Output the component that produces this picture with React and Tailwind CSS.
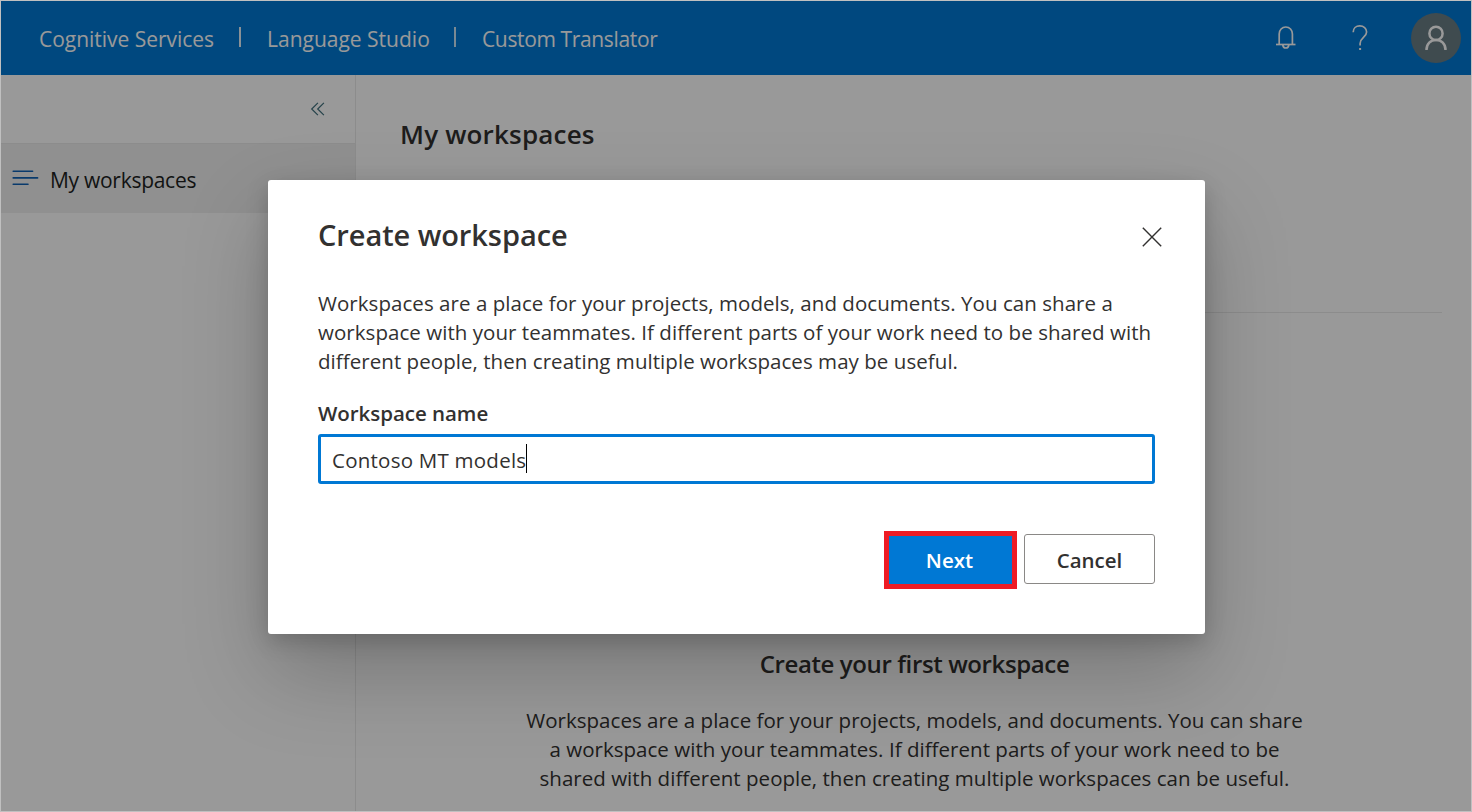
function NavLinesIcon() {
  return (
    <svg width="27" height="17" viewBox="0 0 27 17" fill="none" stroke="#0f62b5" strokeWidth="1.6" strokeLinecap="round">
      <path d="M1.2 2.2H20.6M1.2 8.9H25.6M1.2 15.2H16" />
    </svg>
  );
}

function CollapseIcon() {
  return (
    <svg width="16" height="16" viewBox="0 0 16 16" fill="none" stroke="#3f6f7c" strokeWidth="1.2">
      <path d="M7.9 1.8L1.7 8L7.9 14.2M13.9 1.8L7.7 8L13.9 14.2" />
    </svg>
  );
}

function BellIcon() {
  return (
    <svg width="22" height="26" viewBox="0 0 22 26" fill="none" stroke="#fff" strokeWidth="1.7">
      <path d="M4.2 19.5V9C4.2 5 7 2 10.8 2S17.4 5 17.4 9V19.5" />
      <path d="M1 19.5H20.5" />
      <path d="M7.8 19.8C8 22 9.2 23 10.8 23S13.6 22 13.8 19.8" />
    </svg>
  );
}

function HelpIcon() {
  return (
    <svg width="18" height="28" viewBox="0 0 18 28" fill="none" stroke="#fff" strokeWidth="1.7">
      <path d="M2.2 8.2C2.2 4.4 5 1.9 8.8 1.9S15.6 4.4 15.6 8C15.6 13.4 9.1 13.6 9.1 19.5V21.5" />
      <path d="M9.1 24V26" strokeWidth="2" />
    </svg>
  );
}

function PersonIcon() {
  return (
    <svg width="24" height="26" viewBox="0 0 24 26" fill="none" stroke="#fff" strokeWidth="2.5">
      <circle cx="12" cy="8.4" r="6.6" />
      <path d="M2.5 25C2.5 18.8 6.6 15 12 15S21.5 18.8 21.5 25" />
    </svg>
  );
}

function CloseIcon() {
  return (
    <svg width="20" height="20" viewBox="0 0 20 20" fill="none" stroke="#323130" strokeWidth="1.4">
      <path d="M0.8 0.8L19.2 19.2M19.2 0.8L0.8 19.2" />
    </svg>
  );
}

function Header() {
  return (
    <header className="flex h-[74px] shrink-0 items-center justify-between bg-[#0078d4] pl-[38px] pr-[10px] text-white">
      <nav className="flex items-center pt-px text-[21px] leading-[28px] whitespace-nowrap">
        <span className="w-[200px] tracking-[-0.03px]">Cognitive Services</span>
        <span className="-mt-[3px] h-5 w-[2px] bg-white/90" />
        <span className="ml-[26px] w-[187px]">Language Studio</span>
        <span className="-mt-[3px] h-5 w-[2px] bg-white/80" />
        <span className="ml-[26px] tracking-[-0.36px]">Custom Translator</span>
      </nav>
      <div className="flex items-center">
        <span className="mr-[54px]"><BellIcon /></span>
        <span className="mr-[42px]"><HelpIcon /></span>
        <span className="flex size-[50px] items-center justify-center rounded-full bg-[#697d84]">
          <PersonIcon />
        </span>
      </div>
    </header>
  );
}

function Sidebar() {
  return (
    <aside className="w-[355px] shrink-0 border-r border-[#eaeaea]">
      <div className="flex h-[68px] items-center justify-end pr-[29px] pb-px">
        <CollapseIcon />
      </div>
      <div className="flex h-[70px] items-center border-t border-[#e9e9e9] bg-[#f0f0f0] pb-[2px] pl-[11px] text-[21px] text-[#201f1e]">
        <NavLinesIcon />
        <span className="mt-[4px] ml-[11px] leading-[28px] tracking-[-0.28px] whitespace-nowrap">My workspaces</span>
      </div>
    </aside>
  );
}

function Main() {
  return (
    <main className="flex min-w-0 grow flex-col">
      <div className="mr-[29px] ml-[44px] h-[238px] border-b border-[#eaeaea] pt-[41px]">
        <h1 className="text-[26px] leading-[36px] font-semibold tracking-[0.18px] whitespace-nowrap text-[#323130]">
          My workspaces
        </h1>
      </div>
      <div className="mt-[333px] flex flex-col items-center pl-[2px] text-center text-[#323130]">
        <h2 className="text-[24px] leading-[36px] font-semibold tracking-[-0.38px] whitespace-nowrap">
          Create your first workspace
        </h2>
        <p className="mt-[24px] text-[20.5px] leading-[29px] tracking-[0.03px] whitespace-nowrap">
          Workspaces are a place for your projects, models, and documents. You can share
          <br />a workspace with your teammates. If different parts of your work need to be
          <br />
          shared with different people, then creating multiple workspaces can be useful.
        </p>
      </div>
    </main>
  );
}

function CreateDialog() {
  return (
    <section
      role="dialog"
      className="absolute top-[179px] left-[267px] flex h-[454px] w-[937px] flex-col rounded-[3px] bg-white px-[50px] text-[#323130] shadow-[0_38px_86px_rgba(0,0,0,0.22),0_7px_22px_rgba(0,0,0,0.18)]"
    >
      <div className="mt-[35px] flex h-[40px] items-center justify-between">
        <h2 className="text-[29px] leading-[40px] font-semibold tracking-[-0.07px] whitespace-nowrap">Create workspace</h2>
        <span className="-mr-[7px] mt-[3px]"><CloseIcon /></span>
      </div>
      <p className="mt-[34px] text-[20.5px] leading-[29px] tracking-[0.05px] whitespace-nowrap">
        Workspaces are a place for your projects, models, and documents. You can share a
        <br />
        workspace with your teammates. If different parts of your work need to be shared with
        <br />
        different people, then creating multiple workspaces may be useful.
      </p>
      <label className="mt-[22px] text-[20.5px] leading-[30px] font-semibold tracking-[-0.04px] whitespace-nowrap">
        Workspace name
      </label>
      <div className="mt-[6px] flex h-[50px] items-center rounded-[3px] border-[3px] border-[#0078d4] pb-px pl-[11px]">
        <span className="mt-[2px] text-[20.5px] leading-[30px] tracking-[0.24px] whitespace-nowrap">Contoso MT models</span>
        <span className="h-[29px] w-px bg-black" />
      </div>
      <div className="mt-[47px] flex items-start justify-end gap-[7px] text-[20.5px] leading-[30px] font-semibold">
        <button className="flex h-[58px] w-[133px] items-center justify-center border-[5px] border-[#ee1c25] bg-[#0078d4] pr-[2px] text-white">
          Next
        </button>
        <button className="mt-[3px] flex h-[50px] w-[131px] items-center justify-center rounded-[3px] border border-[#8a8886] bg-white pt-px">
          Cancel
        </button>
      </div>
    </section>
  );
}

export default function App() {
  return (
    <div className="relative flex h-[812px] w-[1472px] flex-col overflow-hidden border border-[#c0c0c0] bg-white font-['Open_Sans','Noto_Sans',sans-serif]">
      <Header />
      <div className="flex min-h-0 grow">
        <Sidebar />
        <Main />
      </div>
      <div className="absolute inset-0 bg-black/40" />
      <CreateDialog />
    </div>
  );
}
